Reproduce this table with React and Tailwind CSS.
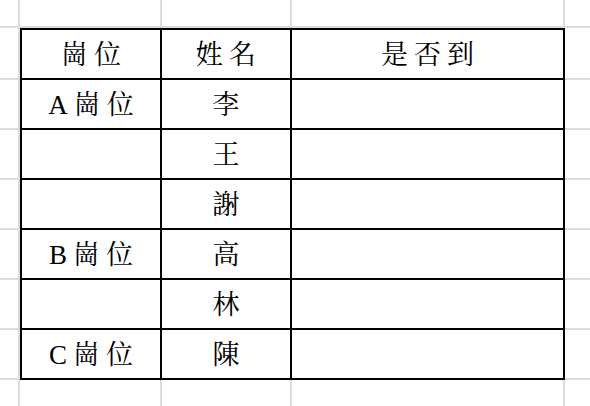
import React from "react";

const rows = [
  ["崗位", "姓名", "是否到"],
  ["A崗位", "李", ""],
  ["", "王", ""],
  ["", "謝", ""],
  ["B崗位", "高", ""],
  ["", "林", ""],
  ["C崗位", "陳", ""],
];

const font = {
  fontFamily:
    '"Liberation Serif", "Noto Serif CJK TC", "Noto Sans CJK TC", serif',
};

function Gray({ last }) {
  return (
    <div
      className={
        "border-b-2 border-[#dcdcdc] " + (last ? "" : "border-r-2")
      }
    />
  );
}

export default function App() {
  const cells = [];
  for (let c = 0; c < 5; c++) cells.push(<Gray key={"t" + c} last={c === 4} />);
  rows.forEach((r, ri) => {
    cells.push(<Gray key={"l" + ri} />);
    r.forEach((txt, ci) => {
      const cls =
        "flex items-center justify-center pt-[3px] pl-[6px] border-r-2 border-b-2 border-black text-[27px] tracking-[6px] text-black leading-none " +
        (ci === 0 ? "border-l-2 " : "") +
        (ri === 0 ? "border-t-2 " : "");
      cells.push(
        <div key={ri + "-" + ci} className={cls} style={font}>
          {txt}
        </div>
      );
    });
    cells.push(<div key={"r" + ri} className="border-b-2 border-[#dcdcdc]" />);
  });
  for (let c = 0; c < 5; c++)
    cells.push(
      <div
        key={"b" + c}
        className={c === 4 ? "" : "border-r-2 border-[#dcdcdc]"}
      />
    );
  return (
    <div className="w-[590px] h-[406px] bg-white overflow-hidden grid grid-cols-[20px_142px_130px_273px_1fr] grid-rows-[28px_52px_repeat(6,50px)_1fr]">
      {cells}
    </div>
  );
}
